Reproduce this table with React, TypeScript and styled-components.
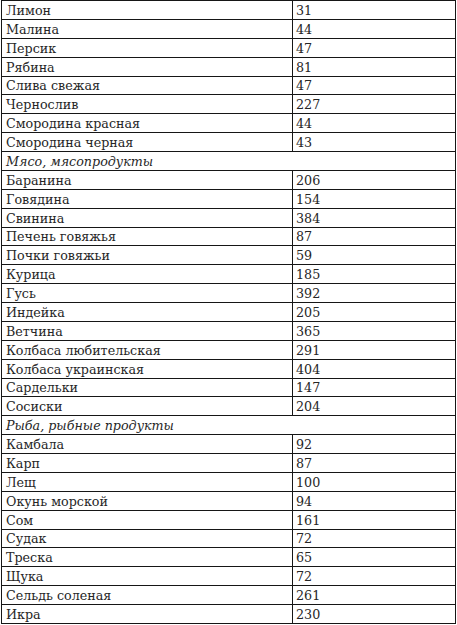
import styled, { createGlobalStyle } from 'styled-components'

type Row = { name: string; value?: string; section?: boolean }

const rows: Row[] = [
  { name: 'Лимон', value: '31' },
  { name: 'Малина', value: '44' },
  { name: 'Персик', value: '47' },
  { name: 'Рябина', value: '81' },
  { name: 'Слива свежая', value: '47' },
  { name: 'Чернослив', value: '227' },
  { name: 'Смородина красная', value: '44' },
  { name: 'Смородина черная', value: '43' },
  { name: 'Мясо, мясопродукты', section: true },
  { name: 'Баранина', value: '206' },
  { name: 'Говядина', value: '154' },
  { name: 'Свинина', value: '384' },
  { name: 'Печень говяжья', value: '87' },
  { name: 'Почки говяжьи', value: '59' },
  { name: 'Курица', value: '185' },
  { name: 'Гусь', value: '392' },
  { name: 'Индейка', value: '205' },
  { name: 'Ветчина', value: '365' },
  { name: 'Колбаса любительская', value: '291' },
  { name: 'Колбаса украинская', value: '404' },
  { name: 'Сардельки', value: '147' },
  { name: 'Сосиски', value: '204' },
  { name: 'Рыба, рыбные продукты', section: true },
  { name: 'Камбала', value: '92' },
  { name: 'Карп', value: '87' },
  { name: 'Лещ', value: '100' },
  { name: 'Окунь морской', value: '94' },
  { name: 'Сом', value: '161' },
  { name: 'Судак', value: '72' },
  { name: 'Треска', value: '65' },
  { name: 'Щука', value: '72' },
  { name: 'Сельдь соленая', value: '261' },
  { name: 'Икра', value: '230' },
]

const GlobalStyle = createGlobalStyle`
  html, body {
    margin: 0;
    padding: 0;
    background: #ffffff;
  }
`

const Table = styled.div`
  margin-left: 1px;
  width: 455px;
  box-sizing: border-box;
  display: grid;
  grid-template-columns: 290px 162px;
  grid-auto-rows: 17.88px;
  gap: 1px;
  padding: 1px;
  background: #161616;
  font-family: 'DejaVu Serif', 'Liberation Serif', serif;
  font-size: 12.7px;
  color: #262626;
`

const Cell = styled.div<{ $section?: boolean; $num?: boolean }>`
  background: #ffffff;
  display: flex;
  align-items: center;
  padding-left: ${(p) => (p.$num ? '3px' : '4px')};
  padding-top: 1px;
  white-space: nowrap;
  overflow: hidden;
  grid-column: ${(p) => (p.$section ? '1 / span 2' : 'auto')};
  font-style: ${(p) => (p.$section ? 'italic' : 'normal')};
`

export default function App() {
  return (
    <>
      <GlobalStyle />
      <Table>
        {rows.map((r) =>
          r.section ? (
            <Cell key={r.name} $section>
              {r.name}
            </Cell>
          ) : (
            <>
              <Cell key={r.name}>{r.name}</Cell>
              <Cell key={r.name + '-v'} $num>
                {r.value}
              </Cell>
            </>
          )
        )}
      </Table>
    </>
  )
}
